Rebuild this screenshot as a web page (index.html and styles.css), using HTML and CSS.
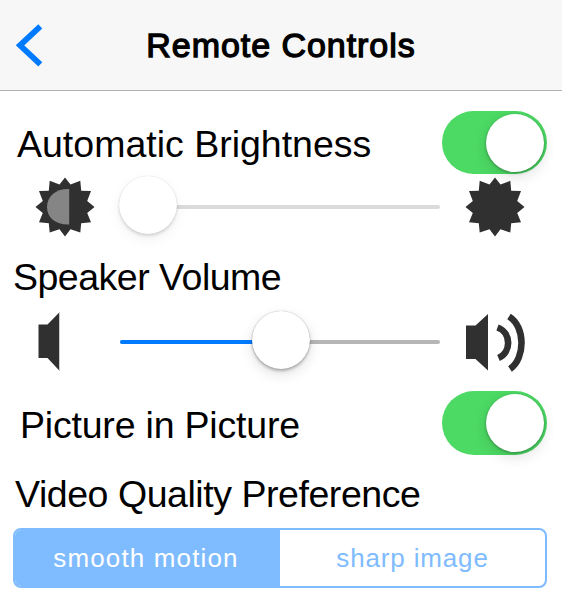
FILE: index.html
```html
<!DOCTYPE html>
<html lang="en">
<head>
<meta charset="utf-8">
<title>Remote Controls</title>
<link rel="stylesheet" href="styles.css">
</head>
<body>
<header class="navbar">
  <svg class="back" viewBox="0 0 30 44" width="30" height="44"><path d="M26.300 4 6 23l20.300 19" transform="translate(0 -.7)"/></svg>
  <h1 class="title">Remote Controls</h1>
</header>
<main>
  <section class="row row-brightness">
    <span class="label label-brightness">Automatic Brightness</span>
    <span class="switch"><span class="switch-knob"></span></span>
  </section>
  <section class="slider-row row-light">
    <svg class="icon" viewBox="-30 -30 60 60" width="60" height="60">
      <path d="M0-29.5 5.500-22.500 15.3-26.2 16.2-16.2 26-16 22.2-6 29.5 0 22.2 6 26 15.2 16.2 16.2 15.3 25.5 5.500 22.200 0 29.5-5.500 22.200-15.3 25.5-16.2 16.2-26 15.2-22.2 6-29.5 0-22.2-6-26-16-16.2-16.2-15.3-26.2-5.500-22.500z"/>
      <path class="half" d="M4.200-18C-9-18.500-18-11-18 0S-9 18 4.200 17.500z"/>
    </svg>
    <div class="slider disabled"><span class="track"></span><span class="knob knob-start"></span></div>
    <svg class="icon" viewBox="-30 -30 60 60" width="60" height="60">
      <path d="M0-29.5 5.500-22.500 15.3-26.2 16.2-16.2 26-16 22.2-6 29.5 0 22.2 6 26 15.2 16.2 16.2 15.3 25.5 5.500 22.200 0 29.5-5.500 22.200-15.3 25.5-16.2 16.2-26 15.2-22.2 6-29.5 0-22.2-6-26-16-16.2-16.2-15.3-26.2-5.500-22.500z"/>
    </svg>
  </section>
  <section class="row row-volume"><span class="label label-volume">Speaker Volume</span></section>
  <section class="slider-row row-sound">
    <svg class="icon" viewBox="0 0 60 60" width="60" height="60"><path class="edge" d="M24 0h1v59h-1z"/><path d="M3.500 12.500h9L24 .8v57.500L12.500 46h-9z"/></svg>
    <div class="slider"><span class="track"></span><span class="fill"></span><span class="knob knob-mid"></span></div>
    <svg class="icon" viewBox="0 0 60 60" width="60" height="60"><path d="M1 13.500h9.500L23 2v56.500L10.500 47H1z"/><path class="wave" d="M32.500 15.500C46.500 20.500 46.500 40.500 33.500 46M44 4.500C60.500 14.500 60.500 46.500 45 57"/></svg>
  </section>
  <section class="row row-picture">
    <span class="label label-picture">Picture in Picture</span>
    <span class="switch"><span class="switch-knob"></span></span>
  </section>
  <section class="row row-quality"><span class="label label-quality">Video Quality Preference</span></section>
  <div class="segments">
    <span class="segment selected">smooth motion</span>
    <span class="segment">sharp image</span>
  </div>
</main>
</body>
</html>
```
FILE: styles.css
```css
* { box-sizing: border-box; }
body {
  margin: 0;
  width: 562px;
  height: 598px;
  overflow: hidden;
  background: #fff;
  color: #000;
  font-family: "Liberation Sans", Arial, sans-serif;
}
.navbar {
  display: grid;
  grid-template-columns: 44px 1fr 44px;
  align-items: center;
  height: 91px;
  padding: 0 14px;
  background: #f7f7f7;
  border-bottom: 1px solid #b2b2b2;
}
.back { fill: none; stroke: #007aff; stroke-width: 5.8; }
.title {
  margin: 0;
  text-align: center;
  white-space: nowrap;
  font-size: 34px;
  line-height: 40px;
  font-weight: 400;
  letter-spacing: .95px;
  -webkit-text-stroke: 1.3px #000;
}
.row {
  display: flex;
  justify-content: space-between;
  align-items: center;
  padding-right: 15px;
}
.label { font-size: 37.5px; line-height: 42px; white-space: nowrap; }
.label-brightness { letter-spacing: 0; padding-top: 1px; }
.label-volume { letter-spacing: -.5px; }
.label-picture { letter-spacing: -.2px; padding-top: 4px; }
.label-quality { letter-spacing: -.45px; }
.row-brightness { height: 64px; margin-top: 20px; padding-left: 17px; }
.row-volume { height: 42px; margin-top: 18px; padding-left: 13px; }
.row-picture { height: 64px; margin-top: 18px; padding-left: 20px; }
.row-quality { height: 42px; margin-top: 18px; padding-left: 15px; }
.switch {
  display: flex;
  justify-content: flex-end;
  align-items: center;
  width: 105px;
  height: 63px;
  padding-right: 3px;
  border-radius: 32px;
  background: #4cd964;
}
.row-brightness .switch { align-self: flex-start; }
.row-picture .switch { height: 64px; }
.switch-knob, .knob {
  width: 58px;
  height: 58px;
  border-radius: 50%;
  background: #fff;
}
.switch-knob { box-shadow: 0 5px 14px rgba(0,0,0,.12), 0 1px 3px rgba(0,0,0,.32); }
.slider-row {
  display: grid;
  grid-template-columns: 60px 320px 60px;
  column-gap: 25px;
  align-items: center;
  height: 62px;
  padding-left: 35px;
}
.row-light { margin-top: 1px; }
.row-sound { margin-top: 13px; }
.icon { fill: #303030; }
.half { fill: #858585; }
.edge { fill: #ccc; }
.wave { fill: none; stroke: #303030; stroke-width: 6.6; }
.slider { position: relative; height: 60px; }
.track, .fill {
  position: absolute;
  left: 0;
  top: 28px;
  width: 100%;
  height: 4px;
  border-radius: 2px;
  background: #b6b6b6;
}
.fill { width: 50%; background: #007aff; }
.knob {
  position: absolute;
  top: -1px;
  box-shadow: 0 5px 14px rgba(0,0,0,.12), 0 2px 3px rgba(0,0,0,.26), 0 0 1px rgba(0,0,0,.35);
}
.disabled .track { background: #dbdbdb; }
.disabled .knob { box-shadow: 0 5px 14px rgba(0,0,0,.06), 0 2px 3px rgba(0,0,0,.13), 0 0 1px rgba(0,0,0,.18); }
.knob-start { left: -1px; }
.knob-mid { left: 132px; }
.segments {
  display: grid;
  grid-template-columns: 1fr 1fr;
  height: 60px;
  margin: 13px 15px 0 13px;
  border: 2px solid #7fbbff;
  border-radius: 8px;
  overflow: hidden;
}
.segment {
  display: flex;
  align-items: center;
  justify-content: center;
  color: #7fbbff;
  font-size: 26px;
  line-height: 30px;
  white-space: nowrap;
  letter-spacing: .85px;
}
.selected { padding-right: 3px; background: #7fbbff; color: #fff; letter-spacing: 1.15px; }
```
